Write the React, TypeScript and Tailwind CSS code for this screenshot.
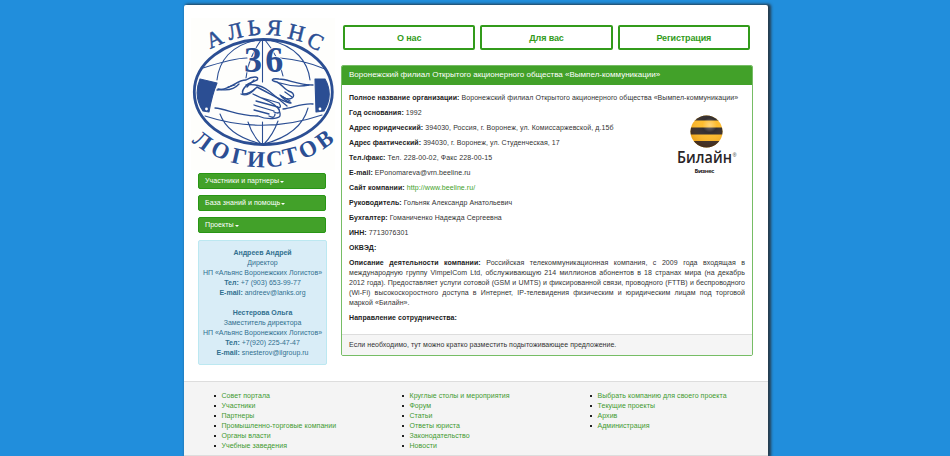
import type { ReactNode } from "react";

const topLetters: [string, number, number, number][] = [
  ["А", 214.5, 39, -24], ["Л", 235, 31.5, -14], ["Ь", 254, 28, -5],
  ["Я", 274, 28, 5], ["Н", 296.5, 33, 14], ["С", 315.5, 41.5, 26],
];
const bottomLetters: [string, number, number, number][] = [
  ["Л", 202.5, 141, 36], ["О", 220.5, 150.5, 26], ["Г", 239, 156.5, 13], ["И", 256, 159.5, 3],
  ["С", 274.5, 159, -5], ["Т", 290.5, 155.5, -14], ["О", 308, 149, -26], ["В", 324.5, 139.5, -36],
];

function Logo() {
  return (
    <svg className="block h-[152px] w-[144px] overflow-visible" viewBox="191 18 144 152" fill="none" stroke="#2b4e93" strokeWidth="1.1" strokeLinecap="round" strokeLinejoin="round">
      <rect x="191" y="18" width="144" height="152" fill="#fefefc" stroke="none" />
      <g fill="#2b4e93" fontFamily="'Liberation Serif', serif" textAnchor="middle">
        {topLetters.map(([c, x, y, r]) => (
          <text key={c + x} transform={`translate(${x} ${y}) rotate(${r})`} y="7.2" fontSize="22.5" strokeWidth=".5">{c}</text>
        ))}
        {bottomLetters.map(([c, x, y, r]) => (
          <text key={c + x} transform={`translate(${x} ${y}) rotate(${r})`} y="7.5" fontSize="23" fontWeight="bold" stroke="none">{c}</text>
        ))}
      </g>
      <ellipse cx="263.3" cy="92" rx="69" ry="52.5" strokeWidth="2.8" />
      <path d="M203 68Q234 58 247 58M280 58Q304 60 325 69M262.5 40V82M262.5 122V144M205 116Q263 135 322 115M257 40C231 45 219 61 217 80M269 40C296 46 308 62 310 80M261 40Q248 59 246 78M265 40Q279 57 283 76M220 114Q228 136 262 144M308 108Q301 134 264 144M248 122Q252 135 261 144M278 121Q273 135 264 144" />
      <path d="M200 79L217 83Q212 95 209 112L203 111Q193 96 200 79ZM315 79H325Q334 95 324 111L316 112Z" fill="#2b4e93" />
      <circle cx="206.5" cy="109" r="1.4" fill="white" stroke="none" />
      <circle cx="320" cy="109" r="1.4" fill="white" stroke="none" />
      <path fill="#fefefc" strokeWidth="1.4" d="M217 90C231 90 236 80 246 80C252 76 260 76 257 80L248 84C245 87 241 90 243 94C248 94 254 90 257 87C271 94 285 103 291 103C285 100 282 98 281 96C292 103 297 95 291 92C284 90 282 84 277 82C270 81 271 78 279 79C288 79 297 85 313 85" />
      <path strokeWidth="1.3" d="M215 108C227 109 239 116 258 116C267 120 281 119 280 115C281 110 276 105 270 102L253 94M313 104C301 103 293 108 283 109M254 110L269 114M254 105L274 111M256 101L278 107M259 97L279 103M269 116Q275 119 275 114M274 112Q281 115 279 109M276 107Q283 109 279 103M246 85Q259 83 269 91L287 106M280 95L290 101M285 92L292 97M218 89Q232 92 239 84M228 87L235 85M280 83Q296 88 309 85M241 94Q247 97 254 90M254 80L247 87" />
      <g fill="#2b4e93" stroke="#fefefc" strokeWidth="1.6" paintOrder="stroke" fontFamily="'Liberation Serif', serif" fontWeight="700" fontSize="36" textAnchor="middle">
        <text x="253" y="72.3">3</text>
        <text x="274.3" y="72.3">6</text>
      </g>
    </svg>
  );
}

function Beeline() {
  return (
    <div className="flex w-[64px] flex-col items-center">
      <svg className="block h-[33px] w-[33px]" viewBox="0 0 33 33">
        <defs>
          <clipPath id="ball"><circle cx="16.5" cy="16.5" r="16" /></clipPath>
          <radialGradient id="shine" cx=".6" cy=".3" r=".65">
            <stop offset="0" stopColor="#fff" stopOpacity=".4" />
            <stop offset=".35" stopColor="#fff" stopOpacity=".05" />
            <stop offset="1" stopColor="#b85a00" stopOpacity=".2" />
          </radialGradient>
        </defs>
        <g clipPath="url(#ball)">
          <rect width="33" height="33" fill="#fdb924" />
          <path fill="#292426" d="M0 0h33v5.5H0zM0 12.5h33v7H0zM0 26h33v7H0z" />
          <circle cx="16.5" cy="16.5" r="16" fill="url(#shine)" />
        </g>
      </svg>
      <svg className="block h-[30px] w-[64px] overflow-visible" viewBox="0 0 64 30" fill="#292426">
        <text x="3" y="14.5" fontFamily="'Open Sans', sans-serif" fontWeight="600" fontSize="16.5" textLength="55" lengthAdjust="spacingAndGlyphs">Билайн</text>
        <text x="58.8" y="8.5" fontFamily="'Liberation Sans', sans-serif" fontSize="5">®</text>
        <text x="30.5" y="25" textAnchor="middle" fontFamily="'Open Sans', sans-serif" fontWeight="700" fontSize="6" textLength="20">Бизнес</text>
      </svg>
    </div>
  );
}

function MenuButton({ children }: { children: ReactNode }) {
  return (
    <div className="flex h-4 items-center gap-[1px] rounded-[2px] border border-[#289615] bg-[#42a129] px-[6px] tracking-[0.03px] text-white">
      <span>{children}</span>
      <span className="mt-px border-x-2 border-t-2 border-x-transparent border-t-white" />
    </div>
  );
}

function TopLink({ children }: { children: ReactNode }) {
  return <div className="flex h-[25px] flex-1 items-center justify-center rounded-[2px] border-2 border-[#329b1b] text-[9px] font-bold tracking-[-0.15px] text-[#329b1b]">{children}</div>;
}

function Field({ label, children }: { label: string; children?: ReactNode }) {
  return <p className="mb-[5px]"><b className="text-[#222]">{label}</b> {children}</p>;
}

const footer = [
  ["Совет портала", "Участники", "Партнеры", "Промышленно-торговые компании", "Органы власти", "Учебные заведения"],
  ["Круглые столы и мероприятия", "Форум", "Статьи", "Ответы юриста", "Законодательство", "Новости"],
  ["Выбрать компанию для своего проекта", "Текущие проекты", "Архив", "Администрация"],
];

export default function App() {
  return (
    <div className="h-[456px] w-[950px] overflow-hidden bg-[#218edc] pl-[184px] pt-[5px] font-['Liberation_Sans',Arial,sans-serif] text-[7px] leading-[10px] text-[#333]">
      <div className="flex h-[451px] w-[584px] flex-col rounded-t-[2px] bg-white shadow-[2px_0_3px_1px_#263b4b]">
        <div className="flex h-[376px]">
          <aside className="w-[157px] pl-[7px] pt-[13px]">
            <Logo />
            <div className="ml-[7px] mt-[3px] flex w-[128px] flex-col gap-[6px] text-[7.1px]">
              <MenuButton>Участники и партнеры</MenuButton>
              <MenuButton>База знаний и помощь</MenuButton>
              <MenuButton>Проекты</MenuButton>
            </div>
            <div className="ml-[7px] mt-[7px] h-[125px] w-[129px] whitespace-nowrap rounded-[2px] border border-[#bce8f1] bg-[#d9edf7] pt-[7px] text-center text-[#31708f]">
              <b>Андреев Андрей</b><br />Директор<br />НП «Альянс Воронежских Логистов»<br /><b>Тел:</b> +7 (903) 653-99-77<br /><b>E-mail:</b> andreev@lanks.org<br /><br />
              <b>Нестерова Ольга</b><br />Заместитель директора<br />НП «Альянс Воронежских Логистов»<br /><b>Тел:</b> +7(920) 225-47-47<br /><b>E-mail:</b> snesterov@ilgroup.ru
            </div>
          </aside>
          <main className="w-[412px] pt-5">
            <nav className="ml-[2px] flex w-[407px] gap-[5px]">
              <TopLink>О нас</TopLink><TopLink>Для вас</TopLink><TopLink>Регистрация</TopLink>
            </nav>
            <section className="mt-[15px] flex h-[291px] flex-col overflow-hidden rounded-[2px] border border-[#76bd65]">
              <h1 className="h-[19px] bg-[#42a129] pl-[7px] pt-[4px] text-[8px] tracking-[0.01px] text-white">Воронежский филиал Открытого акционерного общества «Вымпел-коммуникации»</h1>
              <div className="flex-1 px-[7px] pt-[8px] tracking-[0.07px]">
                <Field label="Полное название организации:">Воронежский филиал Открытого акционерного общества «Вымпел-коммуникации»</Field>
                <div className="flex h-[150px] justify-between">
                  <div>
                    <Field label="Год основания:">1992</Field>
                    <Field label="Адрес юридический:"><span className="tracking-[0.09px]">394030, Россия, г. Воронеж, ул. Комиссаржевской, д.15б</span></Field>
                    <Field label="Адрес фактический:">394030, г. Воронеж, ул. Студенческая, 17</Field>
                    <Field label="Тел./факс:"><span className="tracking-[0.12px]">Тел. 228-00-02, Факс 228-00-15</span></Field>
                    <Field label="E-mail:">EPonomareva@vrn.beeline.ru</Field>
                    <Field label="Сайт компании:"><span className="text-[#42a129]">http://www.beeline.ru/</span></Field>
                    <Field label="Руководитель:">Гольняк Александр Анатольевич</Field>
                    <Field label="Бухгалтер:">Гоманиченко Надежда Сергеевна</Field>
                    <Field label="ИНН:">7713076301</Field>
                    <Field label="ОКВЭД:" />
                  </div>
                  <div className="mr-[7px] pt-[7px]"><Beeline /></div>
                </div>
                <div className="mb-[5px] whitespace-nowrap">
                  <p className="[text-align-last:justify]"><b className="text-[#222]">Описание деятельности компании:</b> Российская телекоммуникационная компания, с 2009 года входящая в</p>
                  <p className="[text-align-last:justify]">международную группу VimpelCom Ltd, обслуживающую 214 миллионов абонентов в 18 странах мира (на декабрь</p>
                  <p className="tracking-[0.04px] [text-align-last:justify]">2012 года). Предоставляет услуги сотовой (GSM и UMTS) и фиксированной связи, проводного (FTTB) и беспроводного</p>
                  <p className="[text-align-last:justify]">(Wi-Fi) высокоскоростного доступа в Интернет, IP-телевидения физическим и юридическим лицам под торговой</p>
                  <p>маркой «Билайн».</p>
                </div>
                <Field label="Направление сотрудничества:" />
              </div>
              <div className="h-[21px] border-t border-[#ddd] bg-[#f5f5f5] pl-[7px] pt-[5px] tracking-[0.045px]">Если необходимо, тут можно кратко разместить подытоживающее предложение.</div>
            </section>
          </main>
        </div>
        <footer className="flex flex-1 border-b border-t border-[#ddd] bg-[#f4f4f4] pt-[9px]">
          {footer.map((items) => (
            <ul key={items[0]} className="w-[188px] whitespace-nowrap pl-[30px]">
              {items.map((item) => (
                <li key={item} className="flex items-center gap-[5.5px]">
                  <span className="size-[2px] bg-[#222]" /><span className="tracking-[0.05px] text-[#429a30]">{item}</span>
                </li>
              ))}
            </ul>
          ))}
        </footer>
      </div>
    </div>
  );
}
